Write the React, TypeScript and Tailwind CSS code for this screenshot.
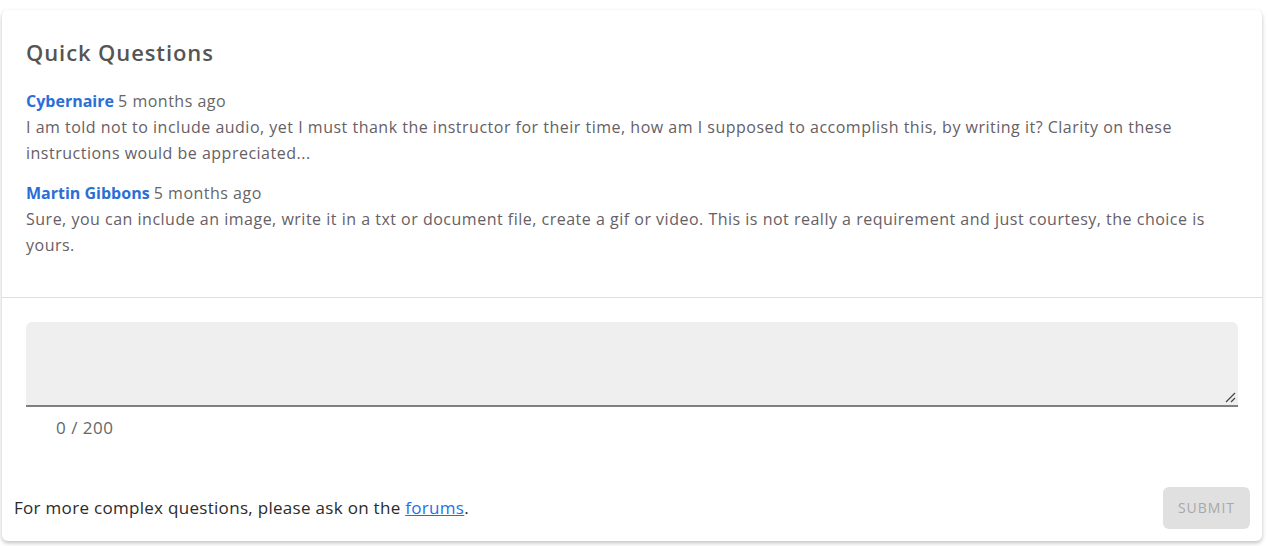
import React from "react";

const comments = [
  {
    author: "Cybernaire",
    when: "5 months ago",
    body: "I am told not to include audio, yet I must thank the instructor for their time, how am I supposed to accomplish this, by writing it? Clarity on these instructions would be appreciated...",
  },
  {
    author: "Martin Gibbons",
    when: "5 months ago",
    body: "Sure, you can include an image, write it in a txt or document file, create a gif or video. This is not really a requirement and just courtesy, the choice is yours.",
  },
];

export default function App() {
  return (
    <div className="min-h-screen bg-white pt-[10px] pl-[2px] pr-[6px] font-['Open_Sans',sans-serif]">
      <div className="h-[531px] bg-white rounded-md shadow-[0_2px_4px_rgba(0,0,0,0.25)] flex flex-col">
        {/* Comments */}
        <div className="px-6 pt-7 pb-[39px]">
          <h2 className="text-[22px] leading-7 font-semibold tracking-[0.9px] text-[#555555]">Quick Questions</h2>
          <div className="mt-[22px] flex flex-col gap-[14px]">
            {comments.map((c) => (
              <div key={c.author} className="text-base leading-[26px]">
                <div>
                  <a className="font-bold text-[#2a6fd6]">{c.author}</a>{" "}
                  <span className="text-[#666666] tracking-[0.5px]">{c.when}</span>
                </div>
                <p className="text-[#666066] tracking-[0.5px]">{c.body}</p>
              </div>
            ))}
          </div>
        </div>

        <div className="border-t border-[#e0e0e0]" />

        {/* Input */}
        <div className="px-6 pt-6">
          <div className="relative h-[85px] bg-[#efefef] rounded-t-md border-b-2 border-[#808080]">
            <svg className="absolute right-[2px] bottom-[2px]" width="12" height="12" viewBox="0 0 12 12">
              <path d="M11 2 L2 11 M11 7 L7 11" stroke="#444" strokeWidth="1.2" />
            </svg>
          </div>
          <div className="pl-[30px] pt-[9px] text-[17px] leading-6 tracking-[0.5px] text-[#666666]">0 / 200</div>
        </div>

        {/* Footer */}
        <div className="mt-auto px-3 pb-3 flex items-center justify-between">
          <p className="text-[17px] tracking-[0.3px] text-[#2b2b2b]">
            For more complex questions, please ask on the{" "}
            <a className="text-[#1a73e8] underline">forums</a>.
          </p>
          <button className="h-[42px] w-[87px] rounded-md bg-[#e0e0e0] text-sm tracking-[1px] text-[#a8a8a8]">
            SUBMIT
          </button>
        </div>
      </div>
    </div>
  );
}
